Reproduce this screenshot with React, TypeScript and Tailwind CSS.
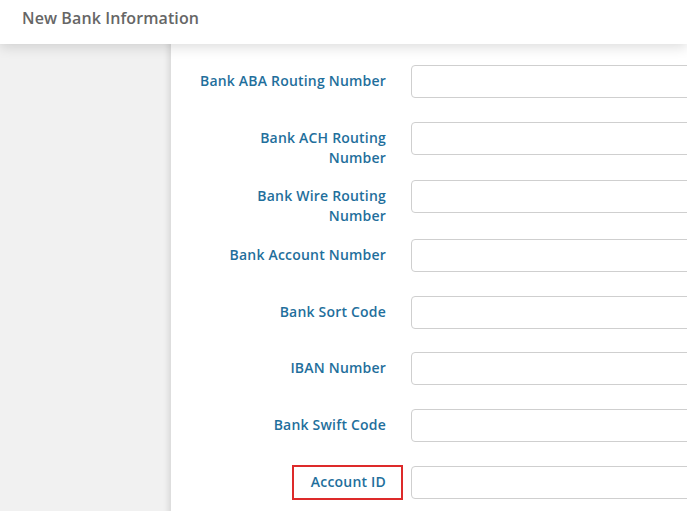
import React from "react";

const rows: { lines: string[]; h: string; highlight?: boolean }[] = [
  { lines: ["Bank ABA Routing Number"], h: "h-[57px]" },
  { lines: ["Bank ACH Routing", "Number"], h: "h-[58px]" },
  { lines: ["Bank Wire Routing", "Number"], h: "h-[59px]" },
  { lines: ["Bank Account Number"], h: "h-[57px]" },
  { lines: ["Bank Sort Code"], h: "h-[56px]" },
  { lines: ["IBAN Number"], h: "h-[57px]" },
  { lines: ["Bank Swift Code"], h: "h-[57px]" },
  { lines: ["Account ID"], h: "h-[57px]", highlight: true },
];

export default function App() {
  return (
    <div className="w-[687px] h-[511px] overflow-hidden bg-white font-['Open_Sans',sans-serif] flex flex-col">
      <div className="h-[44px] shrink-0 relative z-10 bg-white shadow-[0_3px_12px_rgba(0,0,0,0.14)] flex items-center pl-[22px] pb-[8px]">
        <span className="text-[16px] font-semibold text-[#666666] tracking-[0.1px]">New Bank Information</span>
      </div>
      <div className="flex flex-1">
        <div className="w-[171px] shrink-0 bg-[#f1f1f1] shadow-[inset_-7px_0_6px_-5px_rgba(0,0,0,0.12)]" />
        <div className="flex-1 pt-[21px] flex flex-col">
          {rows.map((r, i) => (
            <div key={i} className={`flex items-start shrink-0 ${r.h}`}>
              <div className="w-[215px] shrink-0 pt-[6px] text-right text-[14px] leading-[20px] font-semibold text-[#1f6f9c] tracking-[0.2px]">
                {r.highlight ? (
                  <span className="relative inline-block">
                    Account ID
                    <span className="absolute left-[-19px] right-[-17px] top-[-7px] bottom-[-8px] border-2 border-[#dd2a2a]" />
                  </span>
                ) : (
                  r.lines.map((l, j) => <div key={j}>{l}</div>)
                )}
              </div>
              <div className="ml-[25px] w-[320px] h-[33px] shrink-0 border border-[#cfcfcf] rounded-[4px] bg-white" />
            </div>
          ))}
        </div>
      </div>
    </div>
  );
}
